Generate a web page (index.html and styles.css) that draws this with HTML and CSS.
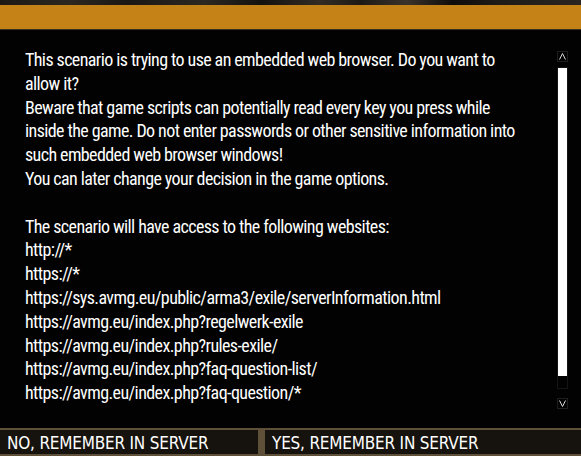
FILE: index.html
```html
<!DOCTYPE html>
<html lang="en">
<head>
<meta charset="utf-8">
<title>Embedded browser</title>
<link rel="stylesheet" href="styles.css">
</head>
<body>
<div class="window">
  <div class="top-strip"></div>
  <div class="titlebar"></div>
  <div class="title-sep"></div>
  <div class="content">
    <div class="text">
      <div class="line">This scenario is trying to use an embedded web browser. Do you want to</div>
      <div class="line">allow it?</div>
      <div class="line">Beware that game scripts can potentially read every key you press while</div>
      <div class="line">inside the game. Do not enter passwords or other sensitive information into</div>
      <div class="line">such embedded web browser windows!</div>
      <div class="line">You can later change your decision in the game options.</div>
      <div class="line">&nbsp;</div>
      <div class="line">The scenario will have access to the following websites:</div>
      <div class="line">http://*</div>
      <div class="line">https://*</div>
      <div class="line">https://sys.avmg.eu/public/arma3/exile/serverInformation.html</div>
      <div class="line">https://avmg.eu/index.php?regelwerk-exile</div>
      <div class="line">https://avmg.eu/index.php?rules-exile/</div>
      <div class="line">https://avmg.eu/index.php?faq-question-list/</div>
      <div class="line">https://avmg.eu/index.php?faq-question/*</div>
    </div>
    <div class="scrollbar">
      <div class="arrow">
        <svg width="9" height="9" viewBox="0 0 9 9"><path d="M1.5 7.5 L4.5 1.5 L7.5 7.5" fill="none" stroke="#d8d8d8" stroke-width="1"/></svg>
      </div>
      <div class="track"><div class="thumb"></div></div>
      <div class="arrow">
        <svg width="9" height="9" viewBox="0 0 9 9"><path d="M1.5 1.5 L4.5 7.5 L7.5 1.5" fill="none" stroke="#d8d8d8" stroke-width="1"/></svg>
      </div>
    </div>
  </div>
  <div class="buttons">
    <div class="btn btn-no">NO, REMEMBER IN SERVER</div>
    <div class="btn btn-yes">YES, REMEMBER IN SERVER</div>
  </div>
</div>
</body>
</html>
```
FILE: styles.css
```css
html, body {
  margin: 0;
  padding: 0;
  background: #000;
}
.window {
  width: 581px;
  height: 456px;
  overflow: hidden;
  display: flex;
  flex-direction: column;
  background: #000;
}
.top-strip {
  height: 5px;
  background: linear-gradient(90deg, #1c1915 0%, #2c2720 12%, #1a1714 22%, #2e2822 35%, #14120f 45%, #332c25 55%, #1d1a16 62%, #3b332b 70%, #0e0c0b 78%, #1f1c18 86%, #2a2520 100%);
}
.titlebar {
  height: 24px;
  background: #c48217;
}
.title-sep {
  height: 1px;
  background: #3a3224;
}
.content {
  flex: 1;
  display: flex;
  flex-direction: row;
  justify-content: space-between;
  background: #020202;
}
.text {
  padding: 18px 0 0 25px;
  font-family: "Roboto Condensed", Roboto, sans-serif;
  font-size: 18px;
  letter-spacing: -0.6px;
  line-height: 23.8px;
  color: #fff;
}
.line {
  white-space: nowrap;
}
.scrollbar {
  width: 11px;
  margin: 21px 13px 0 0;
  display: flex;
  flex-direction: column;
}
.arrow {
  height: 11px;
  box-sizing: border-box;
  border: 1px solid #1e1e1e;
  display: flex;
  align-items: center;
  justify-content: center;
}
.track {
  margin: 5px 0 9px 0;
  height: 322px;
  box-sizing: border-box;
  border: 1px solid #141414;
  padding: 0 0 12px 0;
  display: flex;
}
.thumb {
  flex: 1;
  background: #fff;
}
.buttons {
  height: 28px;
  box-sizing: border-box;
  border-top: 2px solid #5f5139;
  border-bottom: 2px solid #5f5139;
  background: #5f5139;
  display: flex;
  gap: 7px;
}
.btn {
  background: #16130e;
  color: #fff;
  font-family: "DejaVu Sans Condensed", "DejaVu Sans", sans-serif;
  font-stretch: condensed;
  font-weight: 300;
  font-size: 17px;
  letter-spacing: -0.2px;
  line-height: 26px;
  padding-left: 7px;
  white-space: nowrap;
}
.btn-no {
  width: 258px;
  box-sizing: border-box;
}
.btn-yes {
  flex: 1;
}
```
